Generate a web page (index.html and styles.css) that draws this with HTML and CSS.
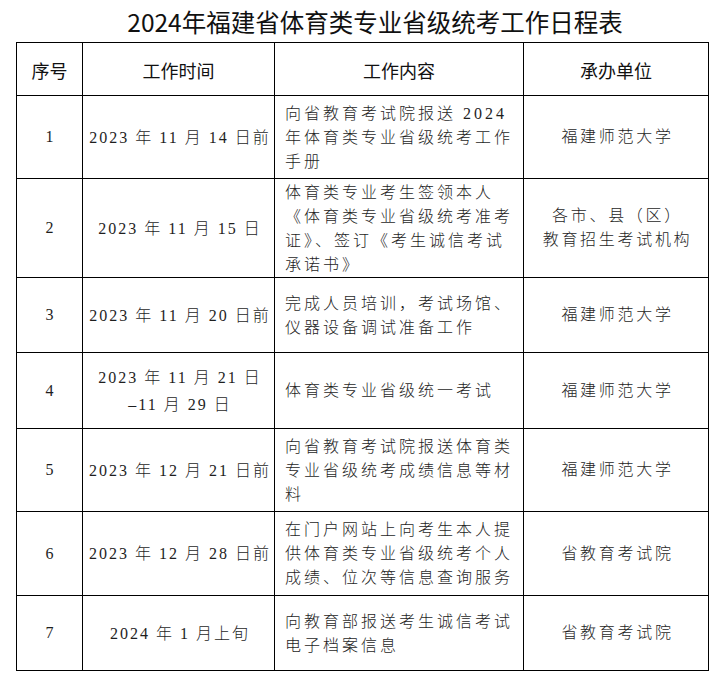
FILE: index.html
```html
<!DOCTYPE html>
<html lang="zh-CN">
<head>
<meta charset="utf-8">
<title>2024年福建省体育类专业省级统考工作日程表</title>
<link rel="stylesheet" href="styles.css">
</head>
<body>
<div class="page">
  <h1 class="title">2024年福建省体育类专业省级统考工作日程表</h1>
  <table class="schedule">
    <colgroup>
      <col class="c-no">
      <col class="c-time">
      <col class="c-work">
      <col class="c-unit">
    </colgroup>
    <thead>
      <tr class="head">
        <th>序号</th>
        <th>工作时间</th>
        <th>工作内容</th>
        <th>承办单位</th>
      </tr>
    </thead>
    <tbody>
      <tr class="h83">
        <td class="no">1</td>
        <td class="time">2023 年 11 月 14 日前</td>
        <td class="work">向省教育考试院报送 2024 年体育类专业省级统考工作手册</td>
        <td class="unit">福建师范大学</td>
      </tr>
      <tr class="h99">
        <td class="no">2</td>
        <td class="time">2023 年 11 月 15 日</td>
        <td class="work">体育类专业考生签领本人《体育类专业省级统考准考证》、签订《考生诚信考试承诺书》</td>
        <td class="unit">各市、县（区）<br>教育招生考试机构</td>
      </tr>
      <tr class="h75">
        <td class="no">3</td>
        <td class="time">2023 年 11 月 20 日前</td>
        <td class="work">完成人员培训，考试场馆、仪器设备调试准备工作</td>
        <td class="unit">福建师范大学</td>
      </tr>
      <tr class="h76">
        <td class="no">4</td>
        <td class="time">2023 年 11 月 21 日<br>–11 月 29 日</td>
        <td class="work">体育类专业省级统一考试</td>
        <td class="unit">福建师范大学</td>
      </tr>
      <tr class="h83">
        <td class="no">5</td>
        <td class="time">2023 年 12 月 21 日前</td>
        <td class="work">向省教育考试院报送体育类专业省级统考成绩信息等材料</td>
        <td class="unit">福建师范大学</td>
      </tr>
      <tr class="h84">
        <td class="no">6</td>
        <td class="time">2023 年 12 月 28 日前</td>
        <td class="work">在门户网站上向考生本人提供体育类专业省级统考个人成绩、位次等信息查询服务</td>
        <td class="unit">省教育考试院</td>
      </tr>
      <tr class="h75">
        <td class="no">7</td>
        <td class="time">2024 年 1 月上旬</td>
        <td class="work">向教育部报送考生诚信考试电子档案信息</td>
        <td class="unit">省教育考试院</td>
      </tr>
    </tbody>
  </table>
</div>
</body>
</html>
```
FILE: styles.css
```css
html, body {
  margin: 0;
  padding: 0;
  background: #ffffff;
}

.page {
  width: 716px;
  padding: 0 0 0 16px;
  box-sizing: border-box;
}

.title {
  margin: 0 0 0 -16px;
  padding: 3px 0 0 34px;
  height: 42px;
  box-sizing: border-box;
  font-family: "Noto Sans CJK SC", sans-serif;
  font-weight: 400;
  font-size: 24.5px;
  line-height: 38px;
  text-align: center;
  color: #111111;
  white-space: nowrap;
}

.schedule {
  border-collapse: collapse;
  table-layout: fixed;
  width: 692px;
  color: #1e1e1e;
}

.c-no { width: 66px; }
.c-time { width: 192px; }
.c-work { width: 249px; }
.c-unit { width: 185px; }

.schedule th,
.schedule td {
  border: 1px solid #000000;
  padding: 0;
  vertical-align: middle;
}

.head { height: 53px; }
.schedule .head th {
  font-family: "Noto Sans CJK SC", sans-serif;
  font-weight: 400;
  font-size: 18px;
  color: #111111;
  text-align: center;
  padding-top: 2px;
}

.h75 { height: 75px; }
.h76 { height: 76px; }
.h83 { height: 83px; }
.h84 { height: 84px; }
.h99 { height: 99px; }

.schedule .no {
  font-family: "Liberation Serif", serif;
  font-size: 16px;
  text-align: center;
}

.schedule .time {
  font-family: "Liberation Serif", "Noto Sans CJK SC", serif;
  font-weight: 300;
  font-size: 16px;
  letter-spacing: 2px;
  line-height: 27px;
  text-align: center;
  padding-left: 3px;
}

.schedule .work {
  font-family: "Liberation Serif", "Noto Sans CJK SC", serif;
  font-weight: 300;
  font-size: 16px;
  letter-spacing: 3px;
  line-height: 24px;
  text-align: left;
  padding: 1px 8px 0 10px;
}

.schedule .unit {
  font-family: "Liberation Serif", "Noto Sans CJK SC", serif;
  font-weight: 300;
  font-size: 16px;
  letter-spacing: 2.7px;
  line-height: 24px;
  text-align: center;
  padding-left: 3px;
}
```
